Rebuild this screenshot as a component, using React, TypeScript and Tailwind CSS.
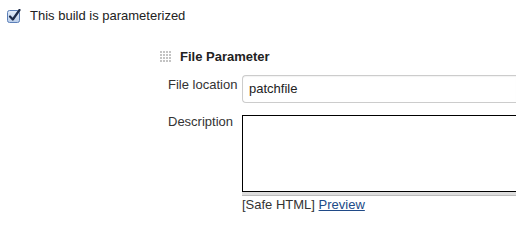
import React from 'react'

const Checkbox = () => (
  <svg width="14" height="14" viewBox="0 0 14 14" className="shrink-0">
    <defs>
      <linearGradient id="cb" x1="0" y1="0" x2="0" y2="1">
        <stop offset="0" stopColor="#e4eefb" />
        <stop offset="1" stopColor="#b9cdea" />
      </linearGradient>
    </defs>
    <rect x="0.5" y="1.5" width="12" height="12" rx="2" fill="url(#cb)" stroke="#5b7fb8" />
    <path d="M3 7.5 L5.8 10.5 L12.5 1" fill="none" stroke="#1c2b4a" strokeWidth="2.2" strokeLinecap="round" strokeLinejoin="round" />
  </svg>
)

const Grip = () => (
  <svg width="12" height="12" viewBox="0 0 12 12" className="shrink-0">
    {[0, 1, 2, 3].map((r) =>
      [0, 1, 2, 3].map((c) => (
        <rect key={`${r}-${c}`} x={c * 3} y={r * 3} width="2" height="2" fill="#c4c4c4" />
      ))
    )}
  </svg>
)

export default function App() {
  return (
    <div className="w-[516px] h-[241px] bg-white overflow-hidden text-[13px] text-[#333] font-['Liberation_Sans',Arial,sans-serif]">
      <div className="flex items-center gap-[9px] pl-[7px] pt-[6px] h-[20px] box-content">
        <Checkbox />
        <span className="text-[#222]">This build is parameterized</span>
      </div>
      <div className="pl-[160px] pt-[24px]">
        <div className="flex items-center gap-[8px] h-[14px]">
          <Grip />
          <span className="font-bold text-[#222]">File Parameter</span>
        </div>
      </div>
      <div className="grid grid-cols-[74px_1fr] pl-[168px] mt-[11px]">
        <div className="pt-[0px]">File location</div>
        <div className="h-[28px] border border-[#ccc] rounded-l-[4px] border-r-0 flex items-center pl-[6px] text-[#222] shadow-[inset_0_1px_1px_rgba(0,0,0,0.05)]">
          patchfile
        </div>
        <div className="mt-[9px]">Description</div>
        <div className="mt-[12px]">
          <div className="h-[77px] border-[1.5px] border-black border-r-0" />
          <div className="h-[4px] bg-[#ddd] border-b border-[#bbb]" />
          <div className="mt-[1px] leading-[15px] text-[#333]">
            [Safe HTML] <a href="#" className="text-[#204a87] underline">Preview</a>
          </div>
        </div>
      </div>
    </div>
  )
}
